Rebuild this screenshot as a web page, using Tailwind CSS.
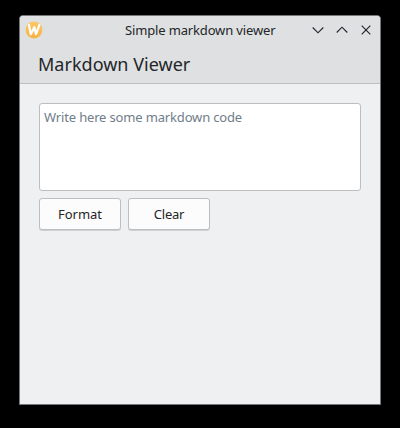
<!DOCTYPE html>
<html lang="en">
<head>
<meta charset="utf-8">
<title>Simple markdown viewer</title>
<script src="https://cdn.jsdelivr.net/npm/@tailwindcss/browser@4"></script>
</head>
<body class="h-[428px] w-[400px] overflow-hidden bg-black pt-[15px] pl-[19px] font-['Noto_Sans',sans-serif] text-[#232629]">
<main class="flex h-[390px] w-[362px] flex-col overflow-hidden rounded-t-[4px] border border-[#75777a] bg-[#eff0f1]">
  <header class="h-[68px] shrink-0 border-b border-[#bcbec0] bg-[#dee0e2]">
    <div class="grid h-[28px] grid-cols-[105px_1fr_72px] items-center">
      <svg class="ml-[5px] size-[18px]" viewBox="0 0 18 18" fill="none">
        <defs>
          <linearGradient id="disc" x1="0" y1="0" x2="0" y2="1">
            <stop offset="0" stop-color="#fdc868"/>
            <stop offset="1" stop-color="#f9b040"/>
          </linearGradient>
        </defs>
        <circle cx="9" cy="9" r="8.4" fill="url(#disc)"/>
        <path d="M4 4 5.8 13.2 9.3 6.2 11 13.2 14.3 4.2" stroke="#fff" stroke-width="2.2" stroke-linejoin="round" stroke-linecap="round"/>
      </svg>
      <span class="text-[13px] leading-[18px] tracking-[-0.15px] whitespace-nowrap">Simple markdown viewer</span>
      <div class="flex items-center gap-2 pl-[2px]">
        <svg class="size-4" viewBox="0 0 16 16" fill="none" stroke="#232629" stroke-width="1.15"><path d="M2.7 5.5 8 10.8l5.3-5.3"/></svg>
        <svg class="size-4" viewBox="0 0 16 16" fill="none" stroke="#232629" stroke-width="1.15"><path d="M2.7 10.5 8 5.2l5.3 5.3"/></svg>
        <svg class="size-4" viewBox="0 0 16 16" fill="none" stroke="#232629" stroke-width="1.15"><path d="m3.7 3.7 8.6 8.6m0-8.6-8.6 8.6"/></svg>
      </div>
    </div>
    <h1 class="pt-[7px] pl-[18px] text-[18px] leading-[26px] tracking-[0.02px]">Markdown Viewer</h1>
  </header>
  <section class="px-[19px] pt-[19px]">
    <textarea class="block h-[88px] w-full resize-none rounded-[3px] border border-[#bcbec0] bg-white px-[4px] py-[4px] text-[13px] leading-[18px] tracking-[-0.16px] outline-none placeholder:text-[#707d8a]" placeholder="Write here some markdown code"></textarea>
    <div class="mt-[7px] flex gap-[7px]">
      <button class="h-[32px] w-[82px] rounded-[3px] border border-[#bcbec0] bg-[#fcfcfc] text-[13px] leading-[18px] shadow-[0_1px_0_#cfd1d3]">Format</button>
      <button class="h-[32px] w-[82px] rounded-[3px] border border-[#bcbec0] bg-[#fcfcfc] text-[13px] leading-[18px] tracking-[-0.25px] shadow-[0_1px_0_#cfd1d3]">Clear</button>
    </div>
  </section>
</main>
</body>
</html>
